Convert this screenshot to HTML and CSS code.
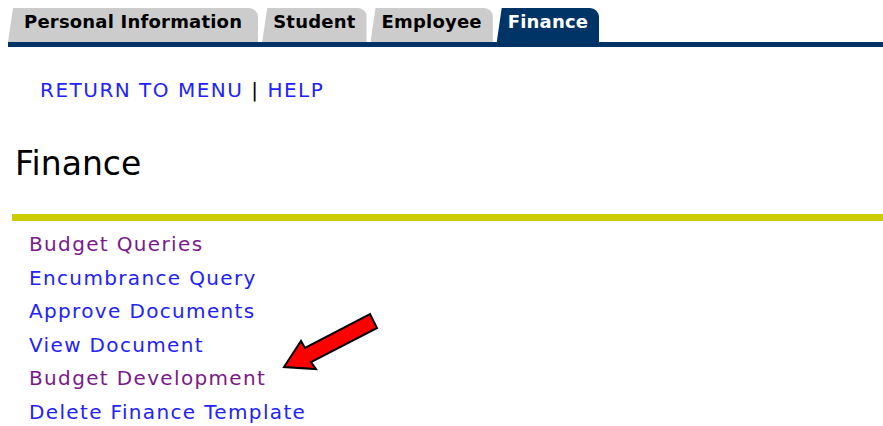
FILE: index.html
```html
<!DOCTYPE html>
<html lang="en">
<head>
<meta charset="utf-8">
<title>Finance</title>
<link rel="stylesheet" href="styles.css">
</head>
<body>
  <nav class="tabbar">
    <a class="tab tab-wide" href="#">Personal Information</a>
    <a class="tab" href="#">Student</a>
    <a class="tab" href="#">Employee</a>
    <a class="tab tab-active" href="#">Finance</a>
  </nav>

  <div class="toplinks">
    <a href="#">RETURN TO MENU</a> <span class="sep">|</span> <a href="#">HELP</a>
  </div>

  <h1 class="title">Finance</h1>

  <div class="rule"></div>

  <ul class="menu">
    <li><a class="visited" href="#">Budget Queries</a></li>
    <li><a href="#">Encumbrance Query</a></li>
    <li><a href="#">Approve Documents</a></li>
    <li><a href="#">View Document</a></li>
    <li><a class="visited" href="#">Budget Development</a></li>
    <li><a href="#">Delete Finance Template</a></li>
  </ul>

  <!-- pointer callout drawn over the menu -->
  <svg class="callout" width="100" height="64" viewBox="280 310 100 64">
    <polygon points="284,367 301,341 305,348 370,314 377,328 311,362 316,369"
             fill="#ff0000" stroke="#000" stroke-width="2" stroke-linejoin="miter"/>
  </svg>
</body>
</html>
```

FILE: styles.css
```css
html, body {
  margin: 0;
  padding: 0;
  background: #ffffff;
}

body {
  position: relative;
  font-family: "DejaVu Sans", Verdana, sans-serif;
  width: 883px;
  height: 426px;
  overflow: hidden;
}

a {
  text-decoration: none;
}

/* tab strip */
.tabbar {
  display: flex;
  gap: 4px;
  margin-left: 8px;
  padding-top: 8px;
  border-bottom: 5px solid #003366;
}

.tab {
  display: block;
  height: 34px;
  line-height: 27px;
  padding: 0 11px;
  background: #cccccc;
  color: #000000;
  font-weight: bold;
  font-size: 18px;
  letter-spacing: 0.2px;
  border-top-right-radius: 9px;
  border-top-left-radius: 4px;
  clip-path: polygon(5px 0, 100% 0, 100% 100%, 0 100%);
}

.tab-wide {
  padding: 0 16px;
}

.tab-active {
  background: #003366;
  color: #ffffff;
}

/* return / help links */
.toplinks {
  margin: 31px 0 0 40px;
  font-size: 20px;
  letter-spacing: 1.5px;
  color: #000;
}

.toplinks a {
  color: #2222ff;
}

.title {
  margin: 42px 0 0 15px;
  font-size: 33px;
  font-weight: normal;
  color: #000;
  line-height: 40px;
}

.rule {
  margin: 30px 0 0 12px;
  height: 7px;
  background: #cccc00;
}

.menu {
  list-style: none;
  margin: 7px 0 0 29px;
  padding: 0;
  font-size: 20px;
  letter-spacing: 1.35px;
  line-height: 33.5px;
}

.menu a {
  color: #2222ff;
}

.menu a.visited {
  color: #7a1a8a;
}

.callout {
  position: absolute;
  left: 280px;
  top: 310px;
}
```
